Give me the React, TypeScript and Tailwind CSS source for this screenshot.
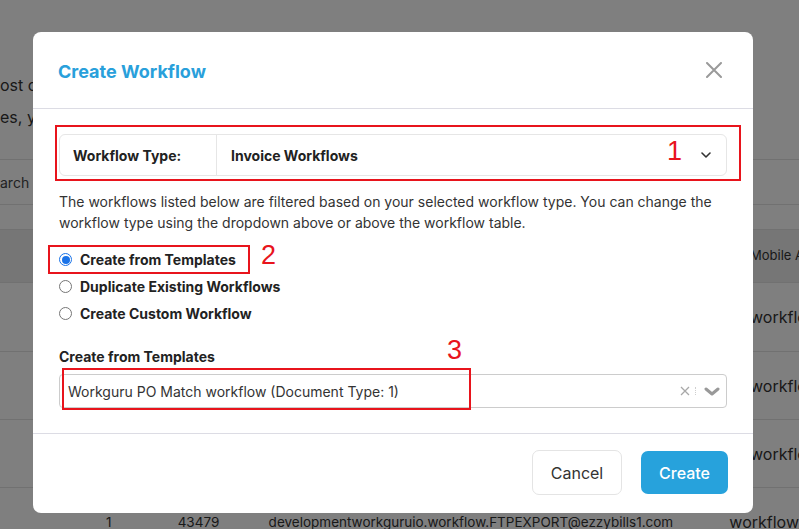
import React from "react";

const font = { fontFamily: "Inter, 'Noto Sans', sans-serif" };

function BgRow({ h, dark, children }: { h: string; dark?: boolean; children?: React.ReactNode }) {
  return (
    <div className={`${h} ${dark ? "bg-[#ededed]" : ""} border-b border-[#e2e2e2] flex items-center text-[14px] text-[#333]`}>
      {children}
    </div>
  );
}

export default function App() {
  return (
    <div className="relative w-[799px] h-[529px] overflow-hidden bg-white" style={font}>
      {/* underlying page */}
      <div className="flex flex-col">
        <div className="h-[160px] border-b border-[#e2e2e2] pt-[73px] text-[16px] text-[#333] leading-[24px] flex flex-col gap-[8px]">
          <div className="whitespace-nowrap">ost commonly used workflows are listed here</div>
          <div className="whitespace-nowrap">es, you can create a new workflow</div>
        </div>
        <div className="h-[45px] border-b border-[#e2e2e2] flex items-center text-[14px] text-[#444] whitespace-nowrap">arch by name</div>
        <div className="h-[25px] border-b border-[#e2e2e2]"></div>
        <BgRow h="h-[53px]" dark>
          <div className="ml-[750px] whitespace-nowrap text-[13px]">Mobile App</div>
        </BgRow>
        <BgRow h="h-[69px]">
          <div className="ml-[750px] whitespace-nowrap text-[16px]">workflow</div>
        </BgRow>
        <BgRow h="h-[68px]">
          <div className="ml-[750px] whitespace-nowrap text-[16px]">workflow</div>
        </BgRow>
        <BgRow h="h-[68px]">
          <div className="ml-[750px] whitespace-nowrap text-[16px]">workflow</div>
        </BgRow>
        <div className="h-[60px] flex items-center text-[13.5px] text-[#333] whitespace-nowrap pt-[8px]">
          <div className="ml-[106px] w-[74px]">1</div>
          <div className="w-[94px]">43479</div>
          <div className="w-[476px]">developmentworkguruio.workflow.FTPEXPORT@ezzybills1.com</div>
          <div className="text-[16px]">workflow</div>
        </div>
      </div>

      {/* overlay */}
      <div className="absolute inset-0 bg-black/50"></div>

      {/* modal */}
      <div className="absolute left-[33px] top-[32px] w-[720px] h-[481px] bg-white rounded-[8px] flex flex-col">
        <div className="h-[77px] border-b border-[#dcdce4] flex items-center justify-between pl-[25px] pr-[26px] shrink-0">
          <div className="text-[18px] font-bold text-[#29a0db] pt-[2px]">Create Workflow</div>
          <svg width="16" height="16" viewBox="0 0 16 16" className="mr-[5px]">
            <path d="M1 1 L15 15 M15 1 L1 15" stroke="#9a9a9a" strokeWidth="2" strokeLinecap="round" />
          </svg>
        </div>

        <div className="flex-1 px-[26px] pt-[25px] flex flex-col">
          <div className="h-[42px] border border-[#e6e6e6] rounded-[6px] flex items-stretch text-[14px] font-bold text-[#222]">
            <div className="w-[157px] border-r border-[#e6e6e6] flex items-center pl-[13px]">Workflow Type:</div>
            <div className="flex-1 flex items-center pl-[14px]">Invoice Workflows</div>
            <div className="flex items-center pr-[15px]">
              <svg width="10" height="6" viewBox="0 0 10 6">
                <path d="M1 1 L5 5 L9 1" stroke="#333" strokeWidth="1.6" fill="none" strokeLinecap="round" strokeLinejoin="round" />
              </svg>
            </div>
          </div>

          <p className="mt-[15px] text-[14px] leading-[21px] text-[#333]">
            The workflows listed below are filtered based on your selected workflow type. You can change the workflow type using the dropdown above or above the workflow table.
          </p>

          <div className="mt-[13px] flex flex-col">
            {[
              ["Create from Templates", true],
              ["Duplicate Existing Workflows", false],
              ["Create Custom Workflow", false],
            ].map(([label, sel]) => (
              <div key={label as string} className="h-[27px] flex items-center gap-[8px] text-[14px] font-bold text-[#222]">
                {sel ? (
                  <span className="w-[13px] h-[13px] rounded-full border border-[#1a73e8] flex items-center justify-center">
                    <span className="w-[8px] h-[8px] rounded-full bg-[#1a73e8]"></span>
                  </span>
                ) : (
                  <span className="w-[13px] h-[13px] rounded-full border border-[#767676]"></span>
                )}
                <span>{label as string}</span>
              </div>
            ))}
          </div>

          <div className="mt-[20px] text-[14px] leading-[20px] font-bold text-[#222]">Create from Templates</div>
          <div className="mt-[7px] h-[34px] border border-[#cccccc] rounded-[4px] flex items-center text-[14px] text-[#333]">
            <div className="flex-1 pl-[8px]">Workguru PO Match workflow (Document Type: 1)</div>
            <svg width="10" height="10" viewBox="0 0 10 10" className="mr-[5px]">
              <path d="M1 1 L9 9 M9 1 L1 9" stroke="#a8a8a8" strokeWidth="1.3" />
            </svg>
            <span className="w-[1px] h-[8px] border-l border-dotted border-[#cfcfcf] mr-[8px]"></span>
            <svg width="16" height="9" viewBox="0 0 16 9" className="mr-[6px]">
              <path d="M2 2 L8 7 L14 2" stroke="#999" strokeWidth="3" fill="none" strokeLinecap="round" strokeLinejoin="round" />
            </svg>
          </div>
        </div>

        <div className="h-[80px] border-t border-[#dcdce4] flex items-center justify-end gap-[19px] pr-[25px] pb-[2px] shrink-0">
          <button className="w-[90px] h-[45px] border border-[#e4e4e4] rounded-[7px] bg-white text-[16px] text-[#333]">Cancel</button>
          <button className="w-[87px] h-[43px] rounded-[7px] bg-[#27a2dc] text-[16px] font-medium text-white">Create</button>
        </div>

        {/* annotations */}
        <div className="absolute left-[22px] top-[93px] w-[686px] h-[56px] border-2 border-[#e8141c]"></div>
        <div className="absolute left-[15px] top-[213px] w-[202px] h-[29px] border-2 border-[#e8141c]"></div>
        <div className="absolute left-[29px] top-[336px] w-[409px] h-[42px] border-2 border-[#e8141c]"></div>
        <div className="absolute left-[634px] top-[106px] text-[27px] leading-[27px] text-[#e8141c]" style={{ fontFamily: "'Liberation Sans', sans-serif" }}>1</div>
        <div className="absolute left-[228px] top-[210px] text-[27px] leading-[27px] text-[#e8141c]" style={{ fontFamily: "'Liberation Sans', sans-serif" }}>2</div>
        <div className="absolute left-[414px] top-[305px] text-[27px] leading-[27px] text-[#e8141c]" style={{ fontFamily: "'Liberation Sans', sans-serif" }}>3</div>
      </div>
    </div>
  );
}
